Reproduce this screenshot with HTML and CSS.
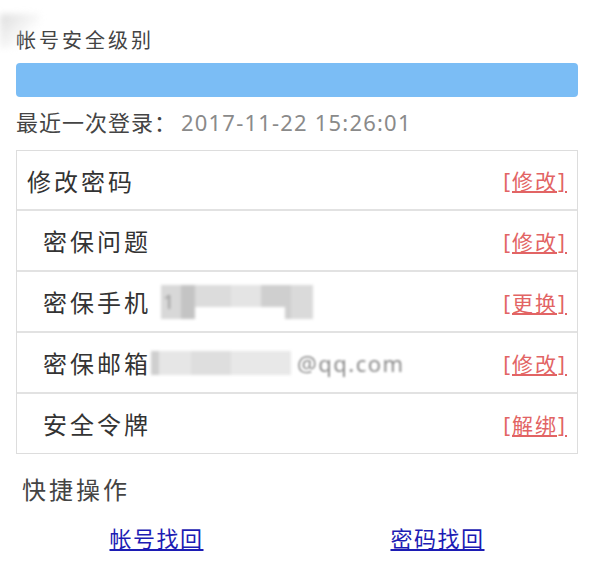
FILE: index.html
```html
<!DOCTYPE html>
<html lang="zh-CN">
<head>
  <meta charset="UTF-8">
  <meta name="viewport" content="width=device-width, initial-scale=1.0">
  <title>帐号安全</title>
  <link rel="stylesheet" href="styles.css">
</head>
<body>
  <div class="page">
    <div class="smudge"></div>
    <h2 class="title">帐号安全级别</h2>
    <div class="level-bar"></div>
    <p class="last-login">最近一次登录：<span class="date">2017-11-22 15:26:01</span></p>

    <ul class="safe-list">
      <li class="row main">
        <span class="label">修改密码</span>
        <a href="#" class="action">[修改]</a>
      </li>
      <li class="row">
        <span class="label">密保问题</span>
        <a href="#" class="action">[修改]</a>
      </li>
      <li class="row">
        <span class="label">密保手机</span>
        <span class="mosaic phone"><span class="first">1</span></span>
        <a href="#" class="action">[更换]</a>
      </li>
      <li class="row">
        <span class="label">密保邮箱</span>
        <span class="mosaic mail"></span><span class="mail-tail">@qq.com</span>
        <a href="#" class="action">[修改]</a>
      </li>
      <li class="row">
        <span class="label">安全令牌</span>
        <a href="#" class="action">[解绑]</a>
      </li>
    </ul>

    <h3 class="quick-title">快捷操作</h3>
    <div class="quick-links">
      <a href="#">帐号找回</a>
      <a href="#">密码找回</a>
    </div>
  </div>
</body>
</html>
```

FILE: styles.css
```css
body {
  margin: 0;
  padding: 0;
  background-color: #fff;
  font-family: "Noto Sans", "Noto Sans CJK SC", sans-serif;
  color: #333;
}

.page {
  position: relative;
  padding: 27px 22px 0 16px;
}

.smudge {
  position: absolute;
  left: 0;
  top: 14px;
  width: 40px;
  height: 34px;
  background: linear-gradient(135deg, #ddd, rgba(255,255,255,0) 70%);
  filter: blur(3px);
}

.title {
  margin: 0 0 8px 0;
  font-size: 20px;
  font-weight: normal;
  line-height: 28px;
  letter-spacing: 3px;
  color: #444;
}

.level-bar {
  height: 34px;
  border-radius: 4px;
  background-color: #7bbdf5;
}

.last-login {
  margin: 7px 0 10px 0;
  font-size: 22px;
  line-height: 36px;
  letter-spacing: 1px;
  color: #444;
}

.last-login .date {
  margin-left: 4px;
  color: #8a8a8a;
  letter-spacing: 1.2px;
}

.safe-list {
  list-style: none;
  margin: 0;
  padding: 0;
  border: 1px solid #ddd;
}

.row {
  display: flex;
  align-items: center;
  height: 59px;
  padding: 0 10px 0 26px;
  border-top: 2px solid #e2e2e2;
}

.row.main {
  border-top: none;
  padding-left: 10px;
  height: 58px;
}

.label {
  font-size: 24px;
  letter-spacing: 3px;
  color: #333;
}

.action {
  margin-left: auto;
  font-size: 21px;
  letter-spacing: 2px;
  color: #e26464;
}

.mosaic {
  display: inline-block;
  height: 34px;
  filter: blur(1.5px);
}

.phone {
  width: 152px;
  margin-left: 10px;
  background:
    linear-gradient(#fff, #fff) 34px 22px / 90px 12px no-repeat,
    linear-gradient(90deg, #d8d8d8 0 20px, #c4c4c4 20px 34px, #dcdcdc 34px 70px, #e4e4e4 70px 100px, #cfcfcf 100px 130px, #dadada 130px 152px);
  color: #999;
  font-size: 20px;
  line-height: 34px;
}

.phone .first {
  padding-left: 2px;
}

.mail {
  width: 140px;
  height: 24px;
  background: linear-gradient(90deg, #cfcfcf 0 8px, #e6e6e6 8px 40px, #dedede 40px 80px, #e8e8e8 80px 140px);
}

.mail-tail {
  margin-left: 6px;
  font-size: 22px;
  letter-spacing: 1.5px;
  color: #8c8c8c;
  filter: blur(1.2px);
}

.quick-title {
  margin: 18px 0 0 6px;
  font-size: 24px;
  font-weight: normal;
  line-height: 36px;
  letter-spacing: 3px;
  color: #444;
}

.quick-links {
  display: grid;
  grid-template-columns: 1fr 1fr;
  margin-top: 12px;
  text-align: center;
  line-height: 36px;
}

.quick-links a {
  font-size: 22px;
  letter-spacing: 1.5px;
  color: #1c1cb4;
}
```
